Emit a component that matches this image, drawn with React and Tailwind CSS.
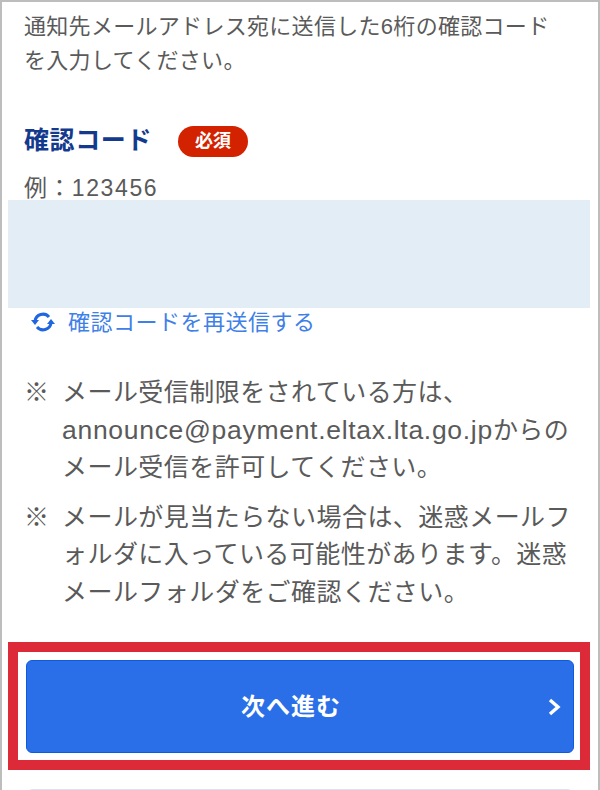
export default function App() {
  return (
    <div className="w-[600px] h-[790px] overflow-hidden bg-white border-l-2 border-r-2 border-t-2 border-[#bdbdbd] font-['Liberation_Sans','Noto_Sans_CJK_JP',sans-serif] text-[#5a5a5a]">
      <div className="pl-[22px] pr-[6px] pt-[8px]">
        <p className="text-[22px] leading-[34px] tracking-[0.3px] h-[68px] w-[540px]">通知先メールアドレス宛に送信した6桁の確認コードを入力してください。</p>
        <div className="flex items-center mt-[46px] h-[34px]">
          <span className="text-[25px] font-bold text-[#133a8c] w-[154px] tracking-[0.6px]">確認コード</span>
          <span className="w-[70px] h-[31px] rounded-full bg-[#d32200] text-white text-[18px] font-bold flex items-center justify-center">必須</span>
        </div>
        <p className="text-[23px] leading-[24px] mt-[18px] h-[24px] tracking-[0.9px]">例：<span className="tracking-[1.6px]">123456</span></p>
      </div>
      <div className="ml-[6px] w-[582px] h-[108px] bg-[#e3edf6]" />
      <div className="flex items-center ml-[28px] h-[28px] gap-[12px] text-[#3f80e8]">
        <svg width="26" height="26" viewBox="0 0 26 26" fill="none" stroke="#1f66e0" strokeWidth="3" className="shrink-0">
          <path d="M5 12a8 8 0 0 1 14-4" />
          <path d="M21 14a8 8 0 0 1-14 4" />
          <path d="M1 11h8l-4 5z" fill="#1f66e0" stroke="none" />
          <path d="M25 15h-8l4-5z" fill="#1f66e0" stroke="none" />
        </svg>
        <span className="text-[22px] tracking-[0.5px]">確認コードを再送信する</span>
      </div>
      <div className="mt-[38px] pl-[22px] text-[25px] leading-[37.5px] tracking-[0.45px]">
        <div className="flex">
          <span className="w-[38px] shrink-0">※</span>
          <p className="w-[530px]">メール受信制限をされている方は、<br /><span className="text-[26.5px] tracking-[0.7px]">announce@payment.eltax.lta.go.jp</span>からの<br />メール受信を許可してください。</p>
        </div>
        <div className="flex mt-[12px]">
          <span className="w-[38px] shrink-0">※</span>
          <p className="w-[530px]">メールが見当たらない場合は、迷惑メールフ<br />ォルダに入っている可能性があります。迷惑<br />メールフォルダをご確認ください。</p>
        </div>
      </div>
      <div className="ml-[6px] mt-[31px] w-[582px] h-[128px] border-[10px] border-[#dd2a38] pl-[8px] pr-[6px] pt-[8px]">
        <button className="relative w-full h-[93px] pr-[18px] rounded-[6px] bg-[#2b6fe8] border border-[#0f5be0] text-white text-[24px] tracking-[1px] font-bold flex items-center justify-center">
          次へ進む
          <svg className="absolute right-[10px] top-[35.5px]" width="16" height="20" viewBox="0 0 16 20" fill="none" stroke="white" strokeWidth="3.4">
            <path d="M3 3l8 7-8 7" />
          </svg>
        </button>
      </div>
      <div className="ml-[26px] mt-[19px] w-[544px] h-[10px] border border-[#d8e2f3] rounded-[4px]" />
    </div>
  );
}
